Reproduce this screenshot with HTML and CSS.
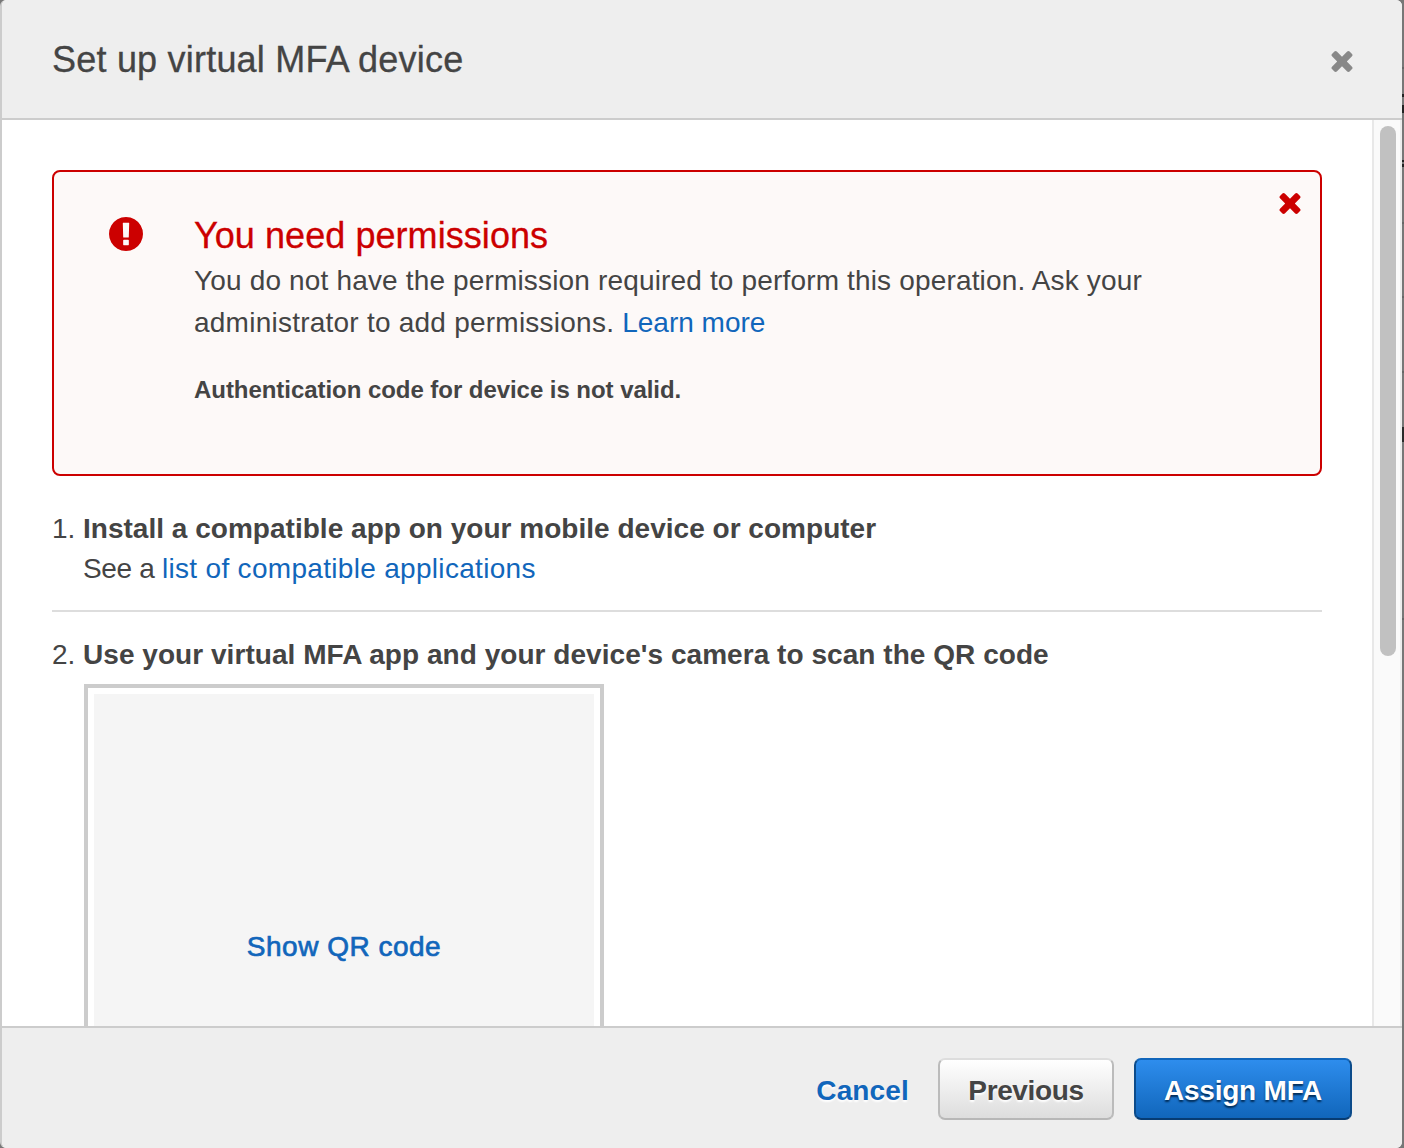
FILE: index.html
```html
<!DOCTYPE html>
<html lang="en">
<head>
<meta charset="utf-8">
<title>Set up virtual MFA device</title>
<link rel="stylesheet" href="styles.css">
</head>
<body>
<main class="dialog" role="dialog" aria-labelledby="title">
  <header class="header">
    <h1 class="title" id="title">Set up virtual MFA device</h1>
    <svg class="close" viewBox="110 366 1188 1188" role="img" aria-label="Close"><path d="M1298 1322q0 40-28 68l-136 136q-28 28-68 28t-68-28l-294-294-294 294q-28 28-68 28t-68-28l-136-136q-28-28-28-68t28-68l294-294-294-294q-28-28-28-68t28-68l136-136q28-28 68-28t68 28l294 294 294-294q28-28 68-28t68 28l136 136q28 28 28 68t-28 68l-294 294 294 294q28 28 28 68z"/></svg>
  </header>
  <div class="body">
    <div class="content">
      <section class="alert">
        <svg class="alert-icon" viewBox="128 128 1536 1536" aria-hidden="true"><path d="M896 128q209 0 385.5 103t279.5 279.5 103 385.5-103 385.5-279.5 279.5-385.5 103-385.5-103-279.5-279.5-103-385.5 103-385.5 279.5-279.5 385.5-103zm128 1247v-190q0-14-9-23.5t-22-9.5h-192q-13 0-23 10t-10 23v190q0 13 10 23t23 10h192q13 0 22-9.5t9-23.5zm-2-344l18-621q0-12-10-18-10-8-24-8h-220q-14 0-24 8-10 6-10 18l17 621q0 10 10 17.5t24 7.5h185q14 0 23.5-7.5t10.5-17.5z"/></svg>
        <div class="alert-text">
          <h2 class="alert-title">You need permissions</h2>
          <p class="alert-message"><span class="message-start">You do not have the permission required to perform this operation. Ask your</span><br><span class="message-end">administrator to add permissions. </span><a class="link">Learn more</a></p>
          <p class="alert-detail">Authentication code for device is not valid.</p>
        </div>
        <svg class="alert-close" viewBox="110 366 1188 1188" role="img" aria-label="Dismiss"><path d="M1298 1322q0 40-28 68l-136 136q-28 28-68 28t-68-28l-294-294-294 294q-28 28-68 28t-68-28l-136-136q-28-28-28-68t28-68l294-294-294-294q-28-28-28-68t28-68l136-136q28-28 68-28t68 28l294 294 294-294q28-28 68-28t68 28l136 136q28 28 28 68t-28 68l-294 294 294 294q28 28 28 68z"/></svg>
      </section>
      <section class="step step-install">
        <span class="number">1.</span>
        <div>
          <h3 class="step-title">Install a compatible app on your mobile device or computer</h3>
          <p class="step-note">See a <a class="link app-list">list of compatible applications</a></p>
        </div>
      </section>
      <section class="step step-scan">
        <span class="number">2.</span>
        <div>
          <h3 class="step-title scan-title">Use your virtual MFA app and your device's camera to scan the QR code</h3>
          <div class="qr"><div class="qr-fill"><a class="link show-qr">Show QR code</a></div></div>
        </div>
      </section>
    </div>
    <div class="scrollbar"><div class="thumb"></div></div>
  </div>
  <footer class="footer">
    <a class="link cancel">Cancel</a>
    <button class="button previous">Previous</button>
    <button class="button assign">Assign MFA</button>
  </footer>
</main>
<div class="backdrop"></div>
</body>
</html>
```
FILE: styles.css
```css
* { box-sizing: border-box; }
body {
  margin: 0;
  width: 1404px;
  height: 1148px;
  overflow: hidden;
  display: flex;
  background: #777;
  color: #444;
  font: 28px/40px "Liberation Sans", Arial, sans-serif;
}
h1, h2, h3, p { margin: 0; font-weight: normal; }
.link { color: #1166bb; }
.dialog {
  width: 1402px;
  height: 1148px;
  display: flex;
  flex-direction: column;
  border-left: 2px solid #ccc;
  border-radius: 6px;
  overflow: hidden;
  background: #fff;
}
.header {
  height: 120px;
  flex: none;
  display: flex;
  justify-content: space-between;
  align-items: center;
  padding: 2px 49px 0 50px;
  background: #eee;
  border-bottom: 2px solid #ccc;
}
.title {
  font-size: 36px;
  line-height: 44px;
  letter-spacing: 0.21px;
  -webkit-text-stroke: 0.3px;
}
.close { width: 22px; height: 21px; fill: #888; margin-top: 2px; }
.body { height: 906px; flex: none; display: flex; overflow: hidden; }
.content { flex: 1; padding: 50px 50px 0; overflow: hidden; }
.alert {
  height: 306px;
  display: flex;
  align-items: flex-start;
  border: 2px solid #c00;
  border-radius: 8px;
  background: #fdf9f8;
  padding: 0 19px 0 55px;
}
.alert-icon { width: 34px; height: 34px; fill: #c00; margin: 45px 51px 0 0; flex: none; }
.alert-text { flex: 1; padding-top: 41px; white-space: nowrap; }
.alert-title {
  font-size: 36px;
  line-height: 46px;
  letter-spacing: 0.06px;
  color: #c00;
  -webkit-text-stroke: 0.3px;
}
.alert-message { margin-top: 1px; line-height: 42px; }
.message-start { letter-spacing: 0.16px; }
.message-end { letter-spacing: 0.235px; }
.alert-detail {
  margin-top: 28px;
  font-size: 24px;
  line-height: 36px;
  font-weight: bold;
  letter-spacing: -0.05px;
}
.alert-close { width: 22px; height: 21px; fill: #c00; margin-top: 21px; flex: none; }
.step { display: flex; white-space: nowrap; }
.number { width: 31px; flex: none; }
.step-title { font-size: 28px; line-height: 40px; font-weight: bold; letter-spacing: 0.02px; }
.scan-title { letter-spacing: 0.045px; }
.step-note { letter-spacing: -0.33px; }
.app-list { letter-spacing: 0.31px; }
.step-install { margin-top: 33px; height: 103px; border-bottom: 2px solid #ddd; }
.step-scan { margin-top: 23px; }
.qr {
  width: 520px;
  height: 520px;
  margin: 9px 0 0 1px;
  padding: 6px;
  border: 4px solid #ccc;
}
.qr-fill {
  height: 500px;
  display: flex;
  align-items: center;
  justify-content: center;
  background: #f5f5f5;
  padding-top: 6px;
}
.show-qr { letter-spacing: 0.5px; -webkit-text-stroke: 0.7px; }
.scrollbar {
  width: 30px;
  padding: 6px 4px 0 6px;
  background: #fafafa;
  border-left: 2px solid #e8e8e8;
  border-right: 2px solid #ededed;
}
.thumb { width: 16px; height: 530px; border-radius: 8px; background: #c1c1c1; }
.footer {
  flex: 1;
  display: flex;
  align-items: center;
  justify-content: flex-end;
  padding: 2px 50px 0 0;
  background: #eee;
  border-top: 2px solid #ccc;
  font-weight: bold;
}
.cancel {
  margin-right: 29px;
  padding-top: 3px;
  letter-spacing: 0.15px;
  text-shadow: 0 2px 2px #fff;
}
.button {
  height: 62px;
  padding: 4px 0 0;
  font: bold 28px/40px "Liberation Sans", Arial, sans-serif;
  border: 2px solid;
  border-radius: 7px;
  white-space: nowrap;
}
.previous {
  width: 176px;
  margin-right: 20px;
  color: #444;
  border-color: #ddd #bbb #b7b7b7;
  background: linear-gradient(#fff, #ddd);
  letter-spacing: -0.37px;
  text-shadow: 0 2px 2px #fff;
}
.assign {
  width: 218px;
  color: #fff;
  border-color: #1166bb #0c4b8a #073c73;
  background: linear-gradient(#2e8ded, #1166bb);
  letter-spacing: -0.2px;
  text-shadow: 0 2px 2px #002b55;
}
/* Dimmed page showing beside the dialog */
.backdrop {
  width: 2px;
  background: linear-gradient(#777 67px, #666 67px 69px, #777 69px 94px, #222 94px 97px, #777 97px 105px, #222 105px 113px, #777 113px 160px, #222 160px 162px, #777 162px 164px, #222 164px 167px, #777 167px 222px, #666 222px 224px, #777 224px 296px, #666 296px 298px, #777 298px 371px, #666 371px 373px, #777 373px 427px, #2a2a2a 427px 442px, #777 442px 618px, #666 618px 620px, #777 620px);
}
```
